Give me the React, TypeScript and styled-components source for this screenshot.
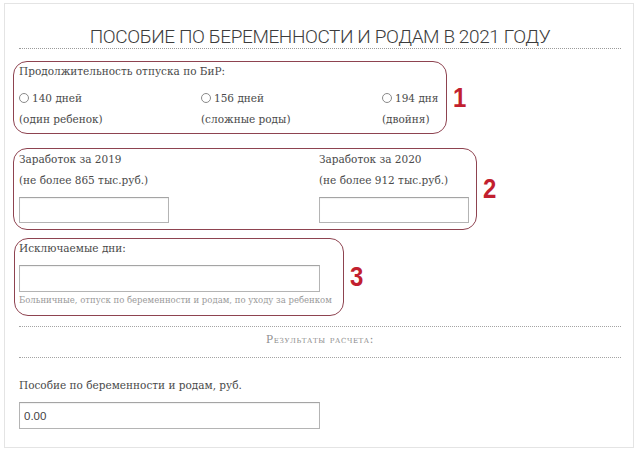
import React from "react";
import styled, {createGlobalStyle} from "styled-components";

const GlobalStyle = createGlobalStyle`
    body {
        margin: 0;
        background: #fff;
        font-family: "DejaVu Serif", "Liberation Serif", serif;
        color: #4a4a4a;
    }
`;

const Card = styled.div`
    box-sizing: border-box;
    height: 445px;
    margin: 3px 6px 0 4px;
    padding: 0 12px 0 14px;
    border: 1px solid #e4e4e4;
`;

const Title = styled.h1`
    margin: 22px 0 0;
    height: 22px;
    line-height: 22px;
    text-align: center;
    font-family: Roboto, "Liberation Sans", sans-serif;
    font-size: 19px;
    font-weight: 300;
    letter-spacing: -0.4px;
    color: #3c3c3c;
    border-bottom: 1px dotted #9a9a9a;
`;

const Row = styled.div<{$top: number}>`
    display: flex;
    align-items: center;
    gap: 6px;
    margin-top: ${(p) => p.$top}px;
`;

const Oval = styled.div<{$width: number; $height: number; $pad: string; $shift?: number}>`
    box-sizing: border-box;
    width: ${(p) => p.$width}px;
    height: ${(p) => p.$height}px;
    margin-left: ${(p) => p.$shift ?? -6}px;
    padding: ${(p) => p.$pad};
    border: 1px solid #8e4350;
    border-radius: 14px;
`;

const Mark = styled.span`
    font-family: "Liberation Sans", Arial, sans-serif;
    font-weight: 700;
    font-size: 24px;
    line-height: 1;
    color: #c21f2f;
    transform: scaleY(1.12);
`;

const Text = styled.div<{$top?: number}>`
    margin-top: ${(p) => p.$top ?? 0}px;
    font-size: 10.5px;
    line-height: 14px;
    white-space: nowrap;
`;

const Hint = styled.div`
    margin-top: 2px;
    font-size: 8.5px;
    line-height: 12px;
    color: #9a9a9a;
    white-space: nowrap;
`;

const Choices = styled.div`
    display: grid;
    grid-template-columns: 182px 181px auto;
    margin-top: 13px;
    row-gap: 7px;
`;

const Radio = styled.label`
    display: inline-flex;
    align-items: center;
    gap: 3px;
    font-size: 10.5px;
    line-height: 14px;
    white-space: nowrap;
`;

const Circle = styled.input`
    appearance: none;
    box-sizing: border-box;
    width: 10px;
    height: 10px;
    margin: 0;
    border: 1px solid #8a8a8a;
    border-radius: 50%;
    background: #fff;
`;

const Columns = styled.div`
    display: grid;
    grid-template-columns: 300px auto;
`;

const Field = styled.input<{$width: number; $height?: number}>`
    display: block;
    box-sizing: border-box;
    width: ${(p) => p.$width}px;
    height: ${(p) => p.$height ?? 27}px;
    margin: 10px 0 0;
    padding: 0 4px;
    border: 1px solid #b4b4b4;
    border-top-color: #a4a4a4;
    box-shadow: inset 0 1px 1px rgba(0, 0, 0, 0.06);
    font-family: "Liberation Sans", Arial, sans-serif;
    font-size: 11.5px;
    color: #444;
    outline: none;
`;

const Results = styled.div`
    margin-top: 10px;
    padding: 5px 0 11px;
    border-top: 1px dotted #a4a4a4;
    border-bottom: 1px dotted #a4a4a4;
    text-align: center;
    font-size: 10.5px;
    line-height: 14px;
    font-variant: small-caps;
    letter-spacing: 0.6px;
    color: #8e8e8e;
`;

const choices = [
    {days: "140 дней", note: "(один ребенок)"},
    {days: "156 дней", note: "(сложные роды)"},
    {days: "194 дня", note: "(двойня)"},
];

export default function App() {
    return (
        <>
            <GlobalStyle />
            <Card>
                <Title>ПОСОБИЕ ПО БЕРЕМЕННОСТИ И РОДАМ В 2021 ГОДУ</Title>

                <Row $top={12}>
                    <Oval $width={434} $height={73} $pad="2px 8px 0 5px">
                        <Text>Продолжительность отпуска по БиР:</Text>
                        <Choices>
                            {choices.map((c) => (
                                <Radio key={c.days}>
                                    <Circle type="radio" name="days" />
                                    {c.days}
                                </Radio>
                            ))}
                            {choices.map((c) => (
                                <Text key={c.note}>{c.note}</Text>
                            ))}
                        </Choices>
                    </Oval>
                    <Mark>1</Mark>
                </Row>

                <Row $top={14}>
                    <Oval $width={464} $height={82} $pad="3px 8px 0 5px">
                        <Columns>
                            <div>
                                <Text>Заработок за 2019</Text>
                                <Text $top={7}>(не более 865 тыс.руб.)</Text>
                                <Field $width={150} $height={26} />
                            </div>
                            <div>
                                <Text>Заработок за 2020</Text>
                                <Text $top={7}>(не более 912 тыс.руб.)</Text>
                                <Field $width={150} $height={26} />
                            </div>
                        </Columns>
                    </Oval>
                    <Mark>2</Mark>
                </Row>

                <Row $top={8}>
                    <Oval $width={330} $height={78} $pad="2px 8px 0 4px" $shift={-5}>
                        <Text>Исключаемые дни:</Text>
                        <Field $width={301} />
                        <Hint>Больничные, отпуск по беременности и родам, по уходу за ребенком</Hint>
                    </Oval>
                    <Mark>3</Mark>
                </Row>

                <Results>Результаты расчета:</Results>

                <Text $top={20}>Пособие по беременности и родам, руб.</Text>
                <Field $width={301} defaultValue="0.00" readOnly />
            </Card>
        </>
    );
}
